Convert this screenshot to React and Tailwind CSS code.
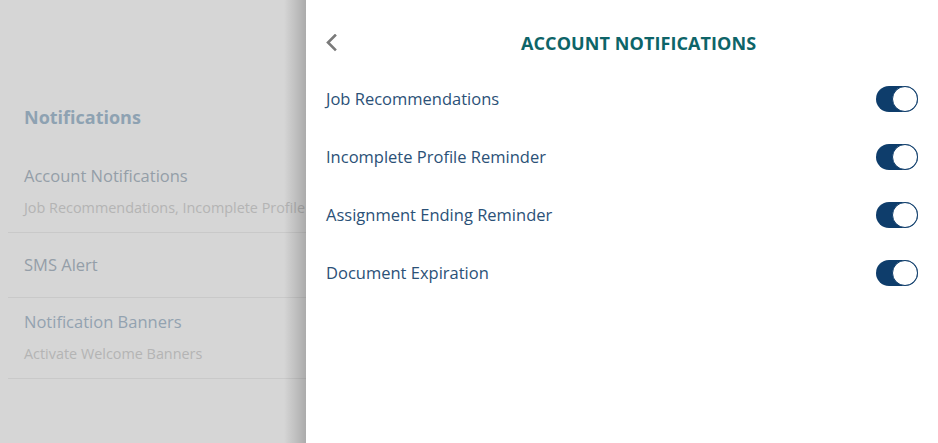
import React from "react";

function Toggle() {
  return (
    <div className="relative h-[26px] w-[42px] rounded-full bg-[#0e3d6b]">
      <div className="absolute right-0 top-0 h-[26px] w-[26px] rounded-full border border-[#0e3d6b] bg-white" />
    </div>
  );
}

const rows = [
  "Job Recommendations",
  "Incomplete Profile Reminder",
  "Assignment Ending Reminder",
  "Document Expiration",
];

export default function App() {
  return (
    <div
      className="flex h-[443px] w-[938px] overflow-hidden bg-[#d6d6d6]"
      style={{ fontFamily: '"Open Sans", sans-serif' }}
    >
      <div className="relative w-[306px] shrink-0 overflow-hidden">
        <div className="w-[420px] pt-[104px]">
          <div className="pl-6 text-[18px] font-bold leading-[26px] text-[#8ea2b2]">Notifications</div>
          <div className="mt-[35px] pl-2">
            <div className="border-b border-[#c9c9c9] pb-[14px] pl-4">
              <div className="text-[16.5px] leading-[22px] text-[#949ea8]">Account Notifications</div>
              <div className="mt-[11px] whitespace-nowrap text-[14.4px] leading-[20px] text-[#b4b4b4]">
                Job Recommendations, Incomplete Profile Reminder
              </div>
            </div>
            <div className="flex h-[65px] items-center border-b border-[#c9c9c9] pl-4 text-[16.5px] text-[#949ea8]">
              SMS Alert
            </div>
            <div className="border-b border-[#c9c9c9] pb-[14px] pl-4 pt-[13px]">
              <div className="text-[16.5px] leading-[22px] text-[#93a2b0]">Notification Banners</div>
              <div className="mt-[11px] text-[14.4px] leading-[20px] text-[#b4b4b4]">Activate Welcome Banners</div>
            </div>
          </div>
        </div>
        <div className="absolute right-0 top-0 h-full w-[22px] bg-gradient-to-r from-transparent to-[#00000033]" />
      </div>
      <div className="flex-1 bg-white px-5 pt-[30px]">
        <div className="relative flex h-[26px] items-center">
          <svg width="12" height="18" viewBox="0 0 12 18">
            <path d="M9 1.5 L2 8.5 L9 15.5" fill="none" stroke="#7a7a7a" strokeWidth="2.6" strokeLinecap="square" />
          </svg>
          <div className="flex-1 pl-[183px] text-[18px] font-bold uppercase tracking-[0.005em] text-[#0d6468]">
            Account Notifications
          </div>
        </div>
        <div className="mt-[14px] flex flex-col">
          {rows.map((r) => (
            <div key={r} className="flex h-[58px] items-center justify-between">
              <span className="text-[16.5px] text-[#2b5177]">{r}</span>
              <Toggle />
            </div>
          ))}
        </div>
      </div>
    </div>
  );
}
